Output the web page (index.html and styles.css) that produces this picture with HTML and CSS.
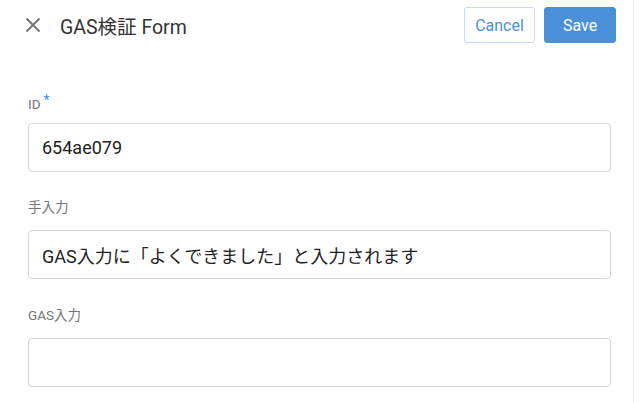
FILE: index.html
```html
<!DOCTYPE html>
<html lang="ja">
<head>
<meta charset="utf-8">
<link rel="stylesheet" href="styles.css">
</head>
<body>
<div class="page">
  <div class="main">
    <header class="header">
      <div class="title-group">
        <button class="close" aria-label="close">
          <svg width="16" height="16" viewBox="0 0 16 16"><path d="M1.5 1.5 L14.5 14.5 M14.5 1.5 L1.5 14.5" stroke="#757575" stroke-width="2" fill="none"/></svg>
        </button>
        <h1 class="title">GAS検証 Form</h1>
      </div>
      <div class="actions">
        <button class="btn btn-cancel">Cancel</button>
        <button class="btn btn-save">Save</button>
      </div>
    </header>
    <form class="form">
      <div class="field">
        <label class="label">ID<span class="req">*</span></label>
        <div class="input">654ae079</div>
      </div>
      <div class="field">
        <label class="label">手入力</label>
        <div class="input">GAS入力に「よくできました」と入力されます</div>
      </div>
      <div class="field field-last">
        <label class="label">GAS入力</label>
        <div class="input"></div>
      </div>
    </form>
  </div>
  <div class="scroll"></div>
</div>
</body>
</html>
```
FILE: styles.css
```css
* { box-sizing: border-box; }
html, body { margin: 0; padding: 0; background: #fff; }
body {
  font-family: Roboto, "Noto Sans CJK JP", sans-serif;
  color: #212121;
  width: 641px;
  height: 402px;
  overflow: hidden;
}
.page { display: flex; height: 402px; }
.main { flex: 1; }
.scroll { width: 8px; border-left: 1px solid #f0f0f0; background: #fff; }
.header {
  display: flex;
  justify-content: space-between;
  align-items: center;
  height: 50px;
  padding: 0 17px 0 25px;
}
.title-group { display: flex; align-items: center; }
.close {
  border: 0; background: none; padding: 0;
  width: 16px; height: 16px;
  display: flex;
  margin-right: 19px;
}
.title {
  font-size: 19.5px;
  font-weight: 400;
  margin: 0;
  color: #333;
}
.actions { display: flex; gap: 9px; }
.btn {
  font-family: Roboto, sans-serif;
  font-size: 16px;
  height: 36px;
  width: 72px;
  border-radius: 3px;
  cursor: pointer;
}
.btn-cancel {
  background: #fff;
  color: #4a90d9;
  border: 1px solid #c6dcf4;
  width: 71px;
}
.btn-save {
  background: #4a90d9;
  color: #fff;
  border: 1px solid #4a90d9;
}
.form {
  padding: 40px 22px 0 28px;
  display: flex;
  flex-direction: column;
  gap: 25px;
}
.field { display: flex; flex-direction: column; }
.field-last { margin-top: 1px; }
.label {
  font-size: 13.5px;
  color: #757575;
  height: 20px;
  line-height: 20px;
  margin-bottom: 13px;
}
.req { color: #4a90d9; font-size: 14px; vertical-align: 4px; margin-left: 3px; }
.input {
  height: 49px;
  border: 1px solid #d6d6d6;
  border-radius: 4px;
  padding: 0 13px;
  display: flex;
  align-items: center;
  font-size: 18px;
  color: #222;
}
```
